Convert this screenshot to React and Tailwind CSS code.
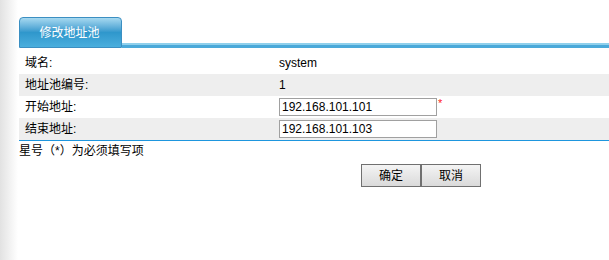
export default function App() {
  const font = { fontFamily: '"Liberation Sans", "Noto Sans CJK SC", sans-serif' };
  return (
    <div className="flex h-[260px] w-[609px] bg-white text-[12px] text-black overflow-hidden" style={font}>
      <div className="w-[18px] shrink-0 bg-gradient-to-r from-[#e2e2e2] to-white" />
      <div className="flex-1 pl-[1px] flex flex-col">
        <div className="mt-[17px] flex items-end h-[31px]">
          <div className="w-[103px] h-[31px] rounded-t-[4px] border border-[#3b8fc2] bg-gradient-to-b from-[#a6d9f0] via-[#2f97cc] to-[#4aaedd] flex items-center justify-center text-white text-[12px] pr-[2px]">
            修改地址池
          </div>
          <div className="flex-1 h-[5px] flex flex-col">
            <div className="h-[2px] bg-[#8fd0ec]" />
            <div className="h-[3px] bg-[#4aa9d9]" />
          </div>
        </div>
        <div className="mt-[4px]">
          <div className="flex items-center h-[22px]">
            <div className="w-[260px] pl-[6px]">域名:</div>
            <div>system</div>
          </div>
          <div className="flex items-center h-[22px] bg-[#eeeeee]">
            <div className="w-[260px] pl-[6px]">地址池编号:</div>
            <div>1</div>
          </div>
          <div className="flex items-center h-[22px]">
            <div className="w-[260px] pl-[6px]">开始地址:</div>
            <div className="flex items-start">
              <div className="w-[158px] h-[18px] border border-[#a0a0a0] bg-white pl-[2px] leading-[16px] text-[12px]">192.168.101.101</div>
              <span className="text-[#ff2020] text-[11px] leading-[10px] ml-[1px]">*</span>
            </div>
          </div>
          <div className="flex items-center h-[22px] bg-[#eeeeee]">
            <div className="w-[260px] pl-[6px]">结束地址:</div>
            <div className="w-[158px] h-[18px] border border-[#a0a0a0] bg-white pl-[2px] leading-[16px] text-[12px]">192.168.101.103</div>
          </div>
          <div className="h-[1px] bg-[#1e96de]" />
        </div>
        <div className="leading-[16px] mt-[2px]">星号（*）为必须填写项</div>
        <div className="flex mt-[5px] ml-[342px]">
          <button className="w-[60px] h-[23px] border border-[#707070] bg-gradient-to-b from-[#f4f4f4] to-[#dadada] text-[12px]">确定</button>
          <button className="w-[60px] h-[23px] border border-[#707070] bg-gradient-to-b from-[#f4f4f4] to-[#dadada] text-[12px]">取消</button>
        </div>
      </div>
    </div>
  );
}
